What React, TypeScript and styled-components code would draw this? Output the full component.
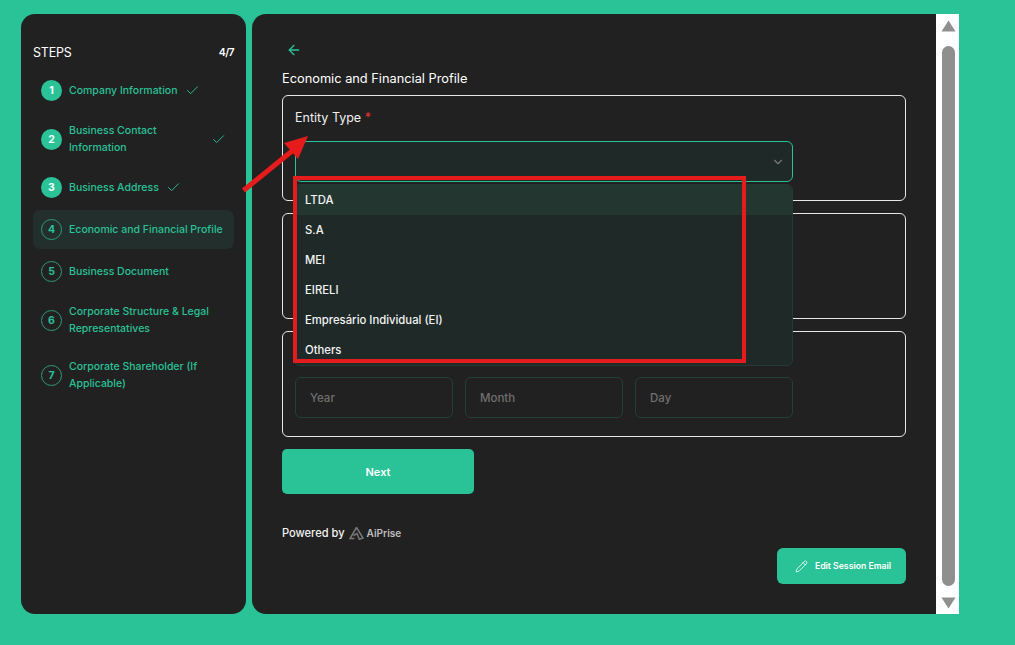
import React from "react";
import styled, { createGlobalStyle } from "styled-components";
import { ArrowLeft, Check, ChevronDown, Pencil } from "lucide-react";

const green = "#2ac297";
const dark = "#212121";

const Global = createGlobalStyle`
  html, body { margin: 0; padding: 0; height: 100%; background: ${green}; overflow: hidden; }
  body { font-family: Inter, "Liberation Sans", Arial, sans-serif; color: #fff; }
  * { box-sizing: border-box; }
`;

const Page = styled.div`
  position: relative;
  display: flex;
  gap: 6px;
  width: 1015px;
  height: 645px;
  padding: 14px 0 31px 21px;
`;

const Sidebar = styled.aside`
  width: 225px;
  height: 600px;
  background: ${dark};
  border-radius: 14px;
  padding: 31px 12px 0;
`;

const StepsHeader = styled.div`
  display: flex;
  justify-content: space-between;
  align-items: center;
  height: 14px;
  margin-bottom: 12px;
  font-size: 12.5px;
  font-weight: 400;
  letter-spacing: -0.2px;
`;

const StepsCount = styled.span`
  font-size: 10.5px;
  font-weight: 600;
  letter-spacing: -0.6px;
`;

const StepList = styled.ol`
  list-style: none;
  margin: 0;
  padding: 0;
  display: flex;
  flex-direction: column;
  gap: 3px;
`;

const StepRow = styled.li<{ $active?: boolean }>`
  display: flex;
  align-items: center;
  gap: 7px;
  padding: 9px 8px;
  border-radius: 7px;
  background: ${(p) => (p.$active ? "#232f2c" : "transparent")};
  color: ${green};
`;

const StepDot = styled.span<{ $done?: boolean }>`
  flex: 0 0 21px;
  width: 21px;
  height: 21px;
  border-radius: 50%;
  display: flex;
  align-items: center;
  justify-content: center;
  font-size: 10.5px;
  font-weight: 700;
  background: ${(p) => (p.$done ? green : "transparent")};
  color: ${(p) => (p.$done ? "#fff" : green)};
  border: ${(p) => (p.$done ? "none" : `1px solid #2a9c7c`)};
`;

const StepLabel = styled.span`
  font-size: 10.5px;
  font-weight: 500;
  line-height: 17px;
`;

const StepCheck = styled(Check)`
  flex: 0 0 15px;
  margin-left: auto;
  color: ${green};
`;

const StepCheckInline = styled(Check)`
  flex: 0 0 15px;
  color: ${green};
`;

const MainWrap = styled.div`
  width: 707px;
  height: 600px;
  display: flex;
  background: ${dark};
  border-radius: 14px 0 0 14px;
  overflow: hidden;
`;

const Main = styled.main`
  width: 684px;
  padding: 28px 30px 0;
  display: flex;
  flex-direction: column;
`;

const BackButton = styled.div`
  height: 15px;
  margin-bottom: 13px;
  padding-left: 4px;
  color: ${green};
  display: flex;
  align-items: center;
`;

const Title = styled.h2`
  margin: 0 0 7px;
  font-size: 12.8px;
  line-height: 18px;
  font-weight: 400;
  color: #fff;
`;

const Cards = styled.div`
  display: flex;
  flex-direction: column;
  gap: 12px;
`;

const Card = styled.section`
  position: relative;
  height: 106px;
  border: 1px solid #e6e6e6;
  border-radius: 6px;
  padding: 0 12px 18px;
  display: flex;
  flex-direction: column;
  justify-content: flex-end;
`;

const FieldLabel = styled.label`
  position: absolute;
  left: 12px;
  top: 13px;
  font-size: 12.5px;
  line-height: 18px;
  font-weight: 400;
  color: #efefef;
`;

const Required = styled.span`
  color: #e5342f;
`;

const SelectBox = styled.div`
  position: relative;
  width: 498px;
  height: 41px;
  border: 1px solid ${green};
  border-radius: 6px;
  background: #1f2927;
  display: flex;
  align-items: center;
  justify-content: flex-end;
  padding-right: 7px;
  color: #777;
`;

const Dropdown = styled.ul`
  position: absolute;
  left: -2px;
  top: 42px;
  width: 499px;
  height: 182px;
  margin: 0;
  padding: 0;
  list-style: none;
  background: #1f2927;
  border: 1px solid #233a33;
  border-radius: 6px;
  overflow: hidden;
  z-index: 2;
`;

const Option = styled.li<{ $active?: boolean }>`
  height: 30px;
  padding-left: 10px;
  display: flex;
  align-items: center;
  font-size: 11.3px;
  font-weight: 500;
  color: #f4f4f4;
  background: ${(p) => (p.$active ? "#233730" : "transparent")};
`;

const DateRow = styled.div`
  display: flex;
  gap: 12px;
  width: 498px;
`;

const DateField = styled.div`
  flex: 1;
  height: 41px;
  border: 1px solid #20403a;
  border-radius: 6px;
  padding-left: 14px;
  display: flex;
  align-items: center;
  font-size: 11.5px;
  font-weight: 500;
  color: #707070;
`;

const NextButton = styled.button`
  width: 192px;
  height: 45px;
  margin-top: 12px;
  border: none;
  border-radius: 5px;
  background: ${green};
  color: #fff;
  font: 600 11px Inter, "Liberation Sans", sans-serif;
`;

const Powered = styled.div`
  display: flex;
  align-items: center;
  gap: 4px;
  height: 16px;
  margin-top: 31px;
  font-size: 11.1px;
  font-weight: 500;
  color: #f2f2f2;
`;

const Brand = styled.span`
  display: inline-flex;
  align-items: center;
  gap: 3px;
  font-weight: 600;
  color: #bdbdbd;
  font-size: 10.1px;
`;

const EditRow = styled.div`
  display: flex;
  justify-content: flex-end;
  margin-top: 7px;
`;

const EditButton = styled.button`
  width: 129px;
  height: 36px;
  border: none;
  border-radius: 6px;
  background: ${green};
  color: #fff;
  display: flex;
  align-items: center;
  justify-content: center;
  gap: 7px;
  padding-left: 9px;
  font: 600 8.7px Inter, "Liberation Sans", sans-serif;
`;

const Scrollbar = styled.div`
  width: 23px;
  height: 600px;
  background: #fff;
  display: flex;
  flex-direction: column;
  align-items: center;
  padding: 6px 0 5px 1px;
`;

const ScrollArrow = styled.svg`
  flex: 0 0 12px;
  width: 15px;
  height: 12px;
  fill: #8f8f8f;
`;

const ScrollThumb = styled.div`
  width: 13px;
  flex: 1;
  margin: 14px 0 11px;
  border-radius: 7px;
  background: #8f8f8f;
`;

const AnnotationArrow = styled.svg`
  position: absolute;
  left: 235px;
  top: 130px;
  z-index: 4;
  pointer-events: none;
`;

const Highlight = styled.div`
  position: absolute;
  left: 293px;
  top: 176px;
  width: 453px;
  height: 187px;
  border: 4.5px solid #e61c1c;
  z-index: 3;
  pointer-events: none;
`;

const steps = [
  { n: 1, label: "Company Information", state: "inline" },
  { n: 2, label: "Business Contact Information", state: "far" },
  { n: 3, label: "Business Address", state: "inline" },
  { n: 4, label: "Economic and Financial Profile", state: "active" },
  { n: 5, label: "Business Document", state: "todo" },
  { n: 6, label: "Corporate Structure & Legal Representatives", state: "todo" },
  { n: 7, label: "Corporate Shareholder (If Applicable)", state: "todo" },
];

const options = ["LTDA", "S.A", "MEI", "EIRELI", "Empresário Individual (EI)", "Others"];

export default function App() {
  return (
    <Page>
      <Global />
      <Sidebar>
        <StepsHeader>
          <span>STEPS</span>
          <StepsCount>4/7</StepsCount>
        </StepsHeader>
        <StepList>
          {steps.map((s) => (
            <StepRow key={s.n} $active={s.state === "active"}>
              <StepDot $done={s.state === "inline" || s.state === "far"}>{s.n}</StepDot>
              <StepLabel>{s.label}</StepLabel>
              {s.state === "inline" && <StepCheckInline size={15} strokeWidth={1.5} />}
              {s.state === "far" && <StepCheck size={15} strokeWidth={1.5} />}
            </StepRow>
          ))}
        </StepList>
      </Sidebar>
      <MainWrap>
        <Main>
          <BackButton>
            <ArrowLeft size={16} strokeWidth={2} />
          </BackButton>
          <Title>Economic and Financial Profile</Title>
          <Cards>
            <Card>
              <FieldLabel>
                Entity Type <Required>*</Required>
              </FieldLabel>
              <SelectBox>
                <ChevronDown size={14} strokeWidth={2} />
                <Dropdown>
                  {options.map((o, i) => (
                    <Option key={o} $active={i === 0}>
                      {o}
                    </Option>
                  ))}
                </Dropdown>
              </SelectBox>
            </Card>
            <Card />
            <Card>
              <DateRow>
                <DateField>Year</DateField>
                <DateField>Month</DateField>
                <DateField>Day</DateField>
              </DateRow>
            </Card>
          </Cards>
          <NextButton>Next</NextButton>
          <Powered>
            Powered by
            <Brand>
              <svg width="15" height="15" viewBox="0 0 15 15" fill="none" stroke="#777" strokeWidth="1.5">
                <path d="M7.5 1.5 L1 12.5 H5.5 M7.5 1.5 L14 12 L9.5 13.5 M4.5 9.5 L8 7.5 L10 12.5" />
              </svg>
              AiPrise
            </Brand>
          </Powered>
          <EditRow>
            <EditButton>
              <Pencil size={13} strokeWidth={1.5} />
              Edit Session Email
            </EditButton>
          </EditRow>
        </Main>
        <Scrollbar>
          <ScrollArrow viewBox="0 0 15 12">
            <path d="M7.5 0.5 L14.5 11.5 H0.5 Z" />
          </ScrollArrow>
          <ScrollThumb />
          <ScrollArrow viewBox="0 0 15 12">
            <path d="M0.5 0.5 H14.5 L7.5 11.5 Z" />
          </ScrollArrow>
        </Scrollbar>
      </MainWrap>
      <Highlight />
      <AnnotationArrow width="80" height="70" viewBox="0 0 80 70">
        <path d="M8.5 60.5 L57 21" stroke="#e61c1c" strokeWidth="5" fill="none" />
        <path d="M73 6 L49 13 L63 29 Z" fill="#e61c1c" />
      </AnnotationArrow>
    </Page>
  );
}
